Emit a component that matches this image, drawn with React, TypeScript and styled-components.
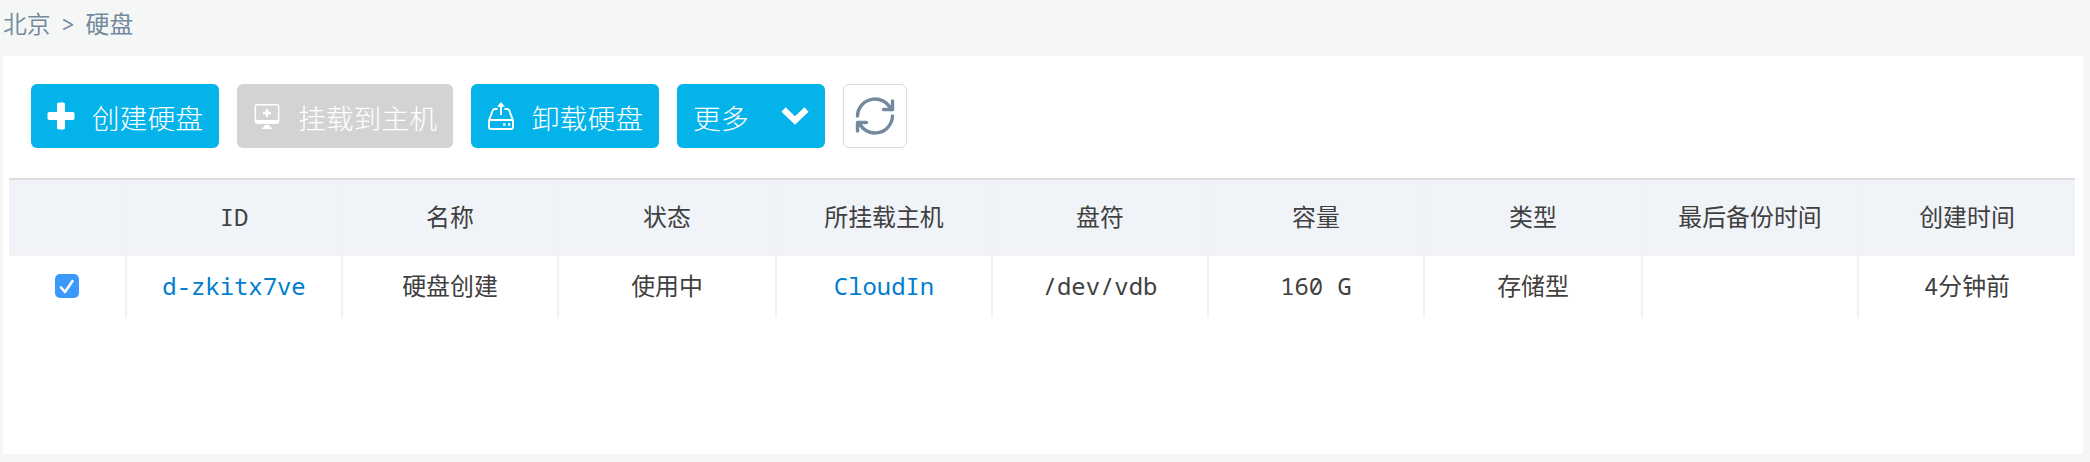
import React from "react";
import styled, { createGlobalStyle, css } from "styled-components";

const GlobalStyle = createGlobalStyle`
  *, *::before, *::after { box-sizing: border-box; }
  body {
    margin: 0;
    background: #f5f7f7;
    color: #404040;
    font-family: "Noto Sans Mono", "DejaVu Sans Mono", "Noto Sans CJK SC", monospace;
    font-size: 23.9px;
    font-weight: 400;
  }
`;

const Page = styled.div`
  height: 462px;
  padding: 0 7px 8px 3px;
  display: flex;
  flex-direction: column;
`;

const Breadcrumb = styled.nav`
  height: 56px;
  padding-top: 5px;
  line-height: 36px;
  display: flex;
  color: #73899e;
  font-family: "Noto Sans CJK SC", sans-serif;
  font-size: 23.8px;
  font-weight: 350;
`;

const Separator = styled.span`
  width: 35px;
  padding-top: 1px;
  text-align: center;
  font-family: "Noto Sans Mono", "DejaVu Sans Mono", monospace;
  font-weight: 400;
`;

const Current = styled.span`
  font-weight: 400;
`;

const Panel = styled.main`
  flex: 1;
  background: #fff;
  padding: 28px 8px 0 6px;
`;

const Toolbar = styled.div`
  display: flex;
  gap: 18px;
  padding-left: 22px;
  margin-bottom: 30px;
`;

const Button = styled.button<{ $width: number; $disabled?: boolean }>`
  width: ${(p) => p.$width}px;
  height: 64px;
  padding: 0 16px;
  border: 0;
  border-radius: 6px;
  display: flex;
  align-items: center;
  justify-content: space-between;
  color: #fff;
  background: ${(p) => (p.$disabled ? "#d3d3d3" : "#05b3eb")};
  font-family: "Noto Sans CJK SC", sans-serif;
  font-size: 27.8px;
  font-weight: 300;
  line-height: 40px;
  white-space: nowrap;
`;

const Label = styled.span`
  padding-top: 2px;
`;

const RefreshButton = styled.button`
  width: 64px;
  height: 64px;
  padding: 0;
  border: 1px solid #dcdcdc;
  border-radius: 6px;
  background: #fff;
  display: flex;
  align-items: center;
  justify-content: center;
`;

const Table = styled.div`
  border-top: 2px solid #ddd;
`;

const Row = styled.div<{ $header?: boolean }>`
  display: grid;
  grid-template-columns: 118px 216px 216px 218px 216px 216px 216px 218px 216px 1fr;
  height: ${(p) => (p.$header ? 76 : 62)}px;
  ${(p) =>
    p.$header &&
    css`
      background: #f0f3f8;
      border-bottom: 4px solid #f3f3f5;
      padding-top: 1px;
    `}
`;

const Cell = styled.div`
  display: flex;
  align-items: center;
  justify-content: center;
  white-space: pre;
  line-height: 34px;
  padding-bottom: 2px;
  border-right: 2px solid #f1f1f1;
  &:last-child { border-right: 0; }
`;

const HeaderCell = styled(Cell)`
  padding-bottom: 0;
`;

const Link = styled.a`
  color: #007dd1;
`;

const Checkbox = styled.span`
  width: 24px;
  height: 24px;
  border-radius: 5px;
  background: #3b99fc;
  display: flex;
`;

const PlusIcon = () => (
  <svg width="28" height="28" viewBox="0 0 28 28" fill="#fff">
    <rect x="10" y="0.5" width="8" height="27" rx="1.8" />
    <rect x="0.5" y="10" width="27" height="8" rx="1.8" />
  </svg>
);

const MonitorIcon = () => (
  <svg width="28" height="28" viewBox="0 0 28 28" fill="#fff">
    <path fillRule="evenodd" d="M4 2h20a2.400 2.400 0 0 1 2.400 2.400v15.200a2.400 2.400 0 0 1-2.400 2.400H4a2.400 2.400 0 0 1-2.400-2.400V4.400A2.400 2.400 0 0 1 4 2zM3.100 3.500v14.500h21.800V3.500z" />
    <path d="M12.700 7h2.600v2.700h2.700v2.600h-2.700V15h-2.600v-2.700H10V9.700h2.700zM11.500 23h5l.6 2.300 1.900.5V27H9v-1.200l1.900-.5z" />
  </svg>
);

const EjectDiskIcon = () => (
  <svg width="28" height="28" viewBox="0 0 28 28" fill="none" stroke="#fff" strokeWidth="1.900">
    <path d="M10.500 7H8Q6.300 7 5.700 8.500L2 18.500V25q0 2 2 2h20q2 0 2-2V18.500L22.300 8.500Q21.700 7 20 7H17.500" />
    <path d="M2.500 18h23M14 13V3" />
    <path d="M14 0l4 4.800h-8z" fill="#fff" stroke="none" />
    <path d="M16.200 22.500h2.300M21 22.500h2.300" strokeWidth="2.300" />
  </svg>
);

const ChevronIcon = () => (
  <svg width="28" height="20" viewBox="0 0 28 20" fill="none" stroke="#fff" strokeWidth="6">
    <path d="M2.500 3.500L14 14.500L25.500 3.500" />
  </svg>
);

const RefreshIcon = () => (
  <svg width="40" height="40" viewBox="0 0 40 40" fill="none" stroke="#73899e" strokeWidth="3.400" strokeLinecap="round" strokeLinejoin="round">
    <path d="M2.500 20A17.500 17.500 0 0 1 36 13.500M37.500 20A17.500 17.500 0 0 1 4 26.500" />
    <path d="M37.500 5v8.500H28.500M2.500 35v-8.500H11.500" />
    <path d="M31.500 13.500L36 9v4.500zM8.500 26.500L4 31v-4.500z" fill="#73899e" strokeWidth="1" />
  </svg>
);

const CheckIcon = () => (
  <svg width="24" height="24" viewBox="0 0 24 24" fill="none" stroke="#fff" strokeWidth="2.600" strokeLinecap="round" strokeLinejoin="round">
    <path d="M6 13.500L10 18L17.500 7" />
  </svg>
);

const HEADERS = ["", "ID", "名称", "状态", "所挂载主机", "盘符", "容量", "类型", "最后备份时间", "创建时间"];

export default function App() {
  return (
    <Page>
      <GlobalStyle />
      <Breadcrumb>
        <span>北京</span>
        <Separator>&gt;</Separator>
        <Current>硬盘</Current>
      </Breadcrumb>
      <Panel>
        <Toolbar>
          <Button $width={188}><PlusIcon /><Label>创建硬盘</Label></Button>
          <Button $width={216} $disabled><MonitorIcon /><Label>挂载到主机</Label></Button>
          <Button $width={188}><EjectDiskIcon /><Label>卸载硬盘</Label></Button>
          <Button $width={148}><Label>更多</Label><ChevronIcon /></Button>
          <RefreshButton aria-label="刷新"><RefreshIcon /></RefreshButton>
        </Toolbar>
        <Table>
          <Row $header>
            {HEADERS.map((h, i) => <HeaderCell key={i}>{h}</HeaderCell>)}
          </Row>
          <Row>
            <Cell><Checkbox><CheckIcon /></Checkbox></Cell>
            <Cell><Link>d-zkitx7ve</Link></Cell>
            <Cell>硬盘创建</Cell>
            <Cell>使用中</Cell>
            <Cell><Link>CloudIn</Link></Cell>
            <Cell>/dev/vdb</Cell>
            <Cell>160 G</Cell>
            <Cell>存储型</Cell>
            <Cell />
            <Cell>4分钟前</Cell>
          </Row>
        </Table>
      </Panel>
    </Page>
  );
}
